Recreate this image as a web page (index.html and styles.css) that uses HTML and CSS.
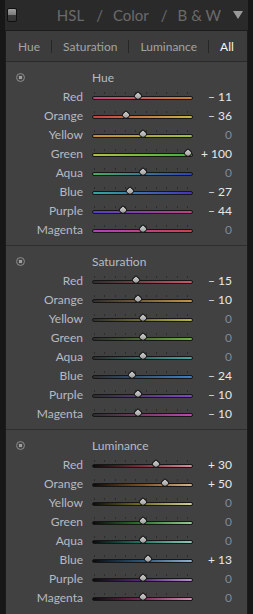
FILE: index.html
```html
<!DOCTYPE html>
<html lang="en">
<head>
    <meta charset="UTF-8">
    <meta name="viewport" content="width=device-width, initial-scale=1.0">
    <title>HSL / Color / B &amp; W</title>
    <link rel="stylesheet" href="styles.css">
</head>
<body>
    <div class="app">
        <div class="panel-head">
            <span class="toggle"></span>
            <h1 class="title">
                <span>HSL</span><span class="slash">/</span><span>Color</span><span class="slash">/</span><span>B &amp; W</span>
            </h1>
            <span class="caret"></span>
        </div>

        <div class="panel">
            <div class="tabs">
                <span class="tab">Hue</span>
                <span class="tab-sep"></span>
                <span class="tab">Saturation</span>
                <span class="tab-sep"></span>
                <span class="tab">Luminance</span>
                <span class="tab-sep"></span>
                <span class="tab active">All</span>
            </div>
            <div id="sections"></div>
        </div>
    </div>

    <script>
        const colors = ['Red', 'Orange', 'Yellow', 'Green', 'Aqua', 'Blue', 'Purple', 'Magenta'];

        const sections = [
            { title: 'Hue', key: 'hue', values: [-11, -36, 0, 100, 0, -27, -44, 0] },
            { title: 'Saturation', key: 'sat', values: [-15, -10, 0, 0, 0, -24, -10, -10] },
            { title: 'Luminance', key: 'lum', values: [30, 50, 0, 0, 0, 13, 0, 0] }
        ];

        // "– 11", "+ 100", "0"
        function formatValue(v) {
            if (v === 0) return '0';
            return (v < 0 ? '\u2013 ' : '+ ') + Math.abs(v);
        }

        const container = document.getElementById('sections');

        sections.forEach(section => {
            const el = document.createElement('div');
            el.className = 'section';

            let html = `
                <div class="section-head">
                    <span class="target"></span>
                    <span class="section-title">${section.title}</span>
                </div>
            `;

            section.values.forEach((v, i) => {
                const name = colors[i];
                // thumb travel: 45.5px each side of the track centre
                const left = 50.5 + v * 0.455 - 4;
                html += `
                    <div class="row">
                        <span class="label">${name}</span>
                        <div class="slider">
                            <div class="ticks"></div>
                            <div class="bar ${section.key}-${name.toLowerCase()}"></div>
                            <span class="thumb" style="left: ${left.toFixed(1)}px"></span>
                        </div>
                        <span class="value${v === 0 ? ' zero' : ''}">${formatValue(v)}</span>
                    </div>
                `;
            });

            el.innerHTML = html;
            container.appendChild(el);
        });
    </script>
</body>
</html>
```

FILE: styles.css
```css
body {
    margin: 0;
    background-color: #171717;
    font-family: Lato, "Open Sans", sans-serif;
    font-size: 12px;
}

.app {
    width: 243px;
    height: 614px;
    margin: 0 5px;
    background-color: #2a2a2a;
}

/* header bar */

.panel-head {
    height: 30px;
    display: flex;
    align-items: center;
    padding: 0 5px 0 2px;
}

.toggle {
    width: 8px;
    height: 12px;
    border: 1px solid #101010;
    border-radius: 2px;
    background: linear-gradient(#a0a0a0, #7a7a7a 50%, #3a3a3a 50%, #343434);
}

.title {
    margin: 0 0 0 auto;
    font-size: 15px;
    font-weight: normal;
    color: #6a6a6a;
    display: flex;
    align-items: center;
}

.slash {
    margin: 0 10px 0 12px;
}

.caret {
    margin-left: 12px;
    width: 0;
    height: 0;
    border-left: 5px solid transparent;
    border-right: 5px solid transparent;
    border-top: 8px solid #9a9a9a;
}

/* panel */

.panel {
    border: 1px solid #1c1c1c;
    border-bottom: none;
    background-color: #414141;
    height: 583px;
}

.tabs {
    height: 30px;
    display: flex;
    align-items: center;
    gap: 11px;
    padding-left: 12px;
    background-color: #3c3c3c;
    border-bottom: 1px solid #2a2a2a;
}

.tab {
    color: #a4a4a4;
}

.tab.active {
    color: #f4f4f4;
}

.tab-sep {
    width: 1px;
    height: 13px;
    background-color: #262626;
}

.section {
    padding: 5px 0 6px;
    border-bottom: 1px solid #2e2e2e;
}

.section:last-child {
    border-bottom: none;
}

.section-head,
.row {
    display: grid;
    grid-template-columns: 78px 101px 1fr;
    column-gap: 8px;
    align-items: center;
}

.section-head {
    height: 20px;
}

.target {
    margin-left: 10px;
    width: 9px;
    height: 9px;
    border-radius: 50%;
    box-sizing: border-box;
    border: 1px solid #8a8a8a;
    background: radial-gradient(circle, #a0a0a0 0 1.5px, #484848 2px);
}

.section-title {
    color: #b4bcc6;
}

.row {
    height: 19px;
}

.label {
    text-align: right;
    padding-right: 1px;
    color: #b6bac2;
}

.value {
    text-align: right;
    padding-right: 15px;
    color: #e8e8e8;
}

.value.zero {
    color: #7e8a98;
}

/* slider */

.slider {
    position: relative;
    height: 19px;
    padding-top: 5px;
    box-sizing: border-box;
}

.ticks {
    height: 2px;
    margin: 0 0 2px 2px;
    width: 95px;
    background-image: repeating-linear-gradient(to right, #2c2c2c 0 1px, transparent 1px 10.33px);
}

.bar {
    height: 4px;
    box-sizing: border-box;
    border: 1px solid #161616;
    border-radius: 2px;
}

.thumb {
    position: absolute;
    top: 5px;
    width: 8px;
    height: 8px;
    box-sizing: border-box;
    border: 1px solid #1c1c1c;
    border-radius: 0 50% 50% 50%;
    transform: scaleY(0.85) rotate(45deg);
    background: linear-gradient(135deg, #d2d2d2, #989898);
}

/* hue tracks */
.hue-red { background: linear-gradient(to right, #c0407a, #c88038); }
.hue-orange { background: linear-gradient(to right, #c84040, #c8b440); }
.hue-yellow { background: linear-gradient(to right, #c88a38, #9cc040); }
.hue-green { background: linear-gradient(to right, #b4c040, #3cb040); }
.hue-aqua { background: linear-gradient(to right, #40b060, #3040c0); }
.hue-blue { background: linear-gradient(to right, #30a8a0, #4830c0); }
.hue-purple { background: linear-gradient(to right, #5040c8, #c04080); }
.hue-magenta { background: linear-gradient(to right, #b040c0, #d04048); }

/* saturation tracks */
.sat-red { background: linear-gradient(to right, #2e2e2e, #c85868); }
.sat-orange { background: linear-gradient(to right, #2e2e2e, #c89440); }
.sat-yellow { background: linear-gradient(to right, #2e2e2e, #b8b440); }
.sat-green { background: linear-gradient(to right, #2e2e2e, #70b040); }
.sat-aqua { background: linear-gradient(to right, #2e2e2e, #40a8a0); }
.sat-blue { background: linear-gradient(to right, #2e2e2e, #3c80c8); }
.sat-purple { background: linear-gradient(to right, #2e2e2e, #8048c8); }
.sat-magenta { background: linear-gradient(to right, #2e2e2e, #c048a8); }

/* luminance tracks */
.lum-red { background: linear-gradient(to right, #0c0c0c, #80303c, #d8909c); }
.lum-orange { background: linear-gradient(to right, #0c0c0c, #805020, #d8b088); }
.lum-yellow { background: linear-gradient(to right, #0c0c0c, #787420, #d0d098); }
.lum-green { background: linear-gradient(to right, #0c0c0c, #307830, #98c898); }
.lum-aqua { background: linear-gradient(to right, #0c0c0c, #207868, #90c8b8); }
.lum-blue { background: linear-gradient(to right, #0c0c0c, #285880, #90b0d0); }
.lum-purple { background: linear-gradient(to right, #0c0c0c, #582880, #b890d0); }
.lum-magenta { background: linear-gradient(to right, #0c0c0c, #802860, #d090b8); }
```
